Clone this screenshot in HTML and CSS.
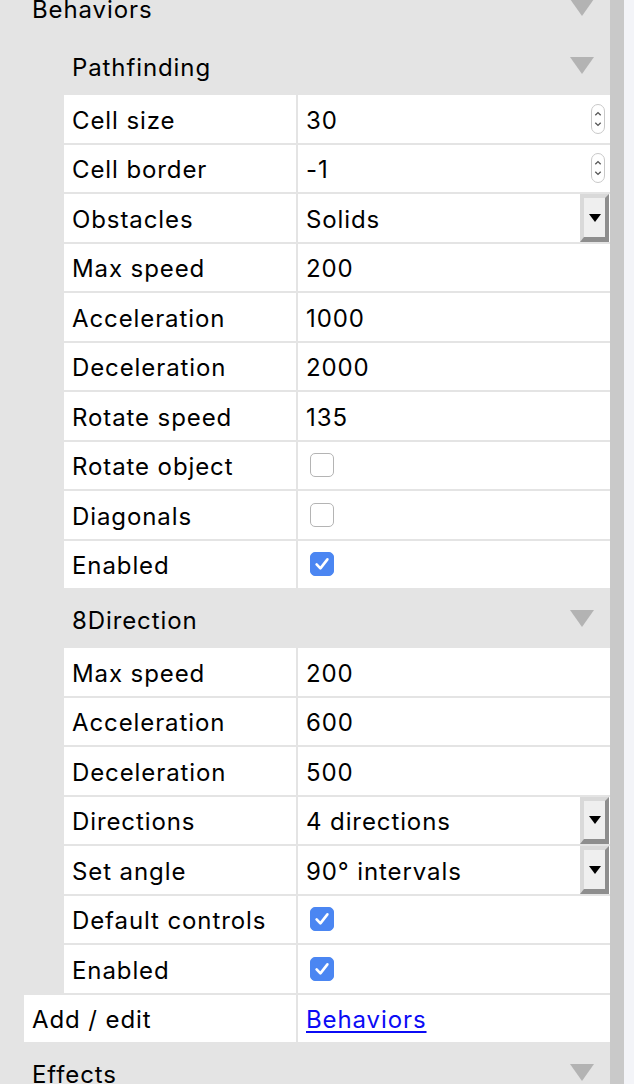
FILE: index.html
```html
<!DOCTYPE html>
<html>
<head>
<meta charset="utf-8">
<link rel="stylesheet" href="styles.css">
</head>
<body>
<div class="app">
  <main class="panel">
    <div class="hdr">Behaviors<span class="tri"></span></div>
    <div class="group">
      <div class="hdr">Pathfinding<span class="tri"></span></div>
      <div class="row"><div class="k">Cell size</div><div class="v">30<span class="spin"><svg viewBox="0 0 14 30" width="14" height="30"><rect x="0.5" y="0.5" width="13" height="29" rx="6.5" fill="#fff" stroke="#c8c8c8"/><path d="M4.3 11.3 L7 8.6 L9.7 11.3" fill="none" stroke="#555" stroke-width="1.3"/><path d="M4.3 18.7 L7 21.4 L9.7 18.7" fill="none" stroke="#555" stroke-width="1.3"/></svg></span></div></div>
      <div class="row"><div class="k">Cell border</div><div class="v">-1<span class="spin"><svg viewBox="0 0 14 30" width="14" height="30"><rect x="0.5" y="0.5" width="13" height="29" rx="6.5" fill="#fff" stroke="#c8c8c8"/><path d="M4.3 11.3 L7 8.6 L9.7 11.3" fill="none" stroke="#555" stroke-width="1.3"/><path d="M4.3 18.7 L7 21.4 L9.7 18.7" fill="none" stroke="#555" stroke-width="1.3"/></svg></span></div></div>
      <div class="row"><div class="k">Obstacles</div><div class="v">Solids<span class="drop"><span class="dtri"></span></span></div></div>
      <div class="row"><div class="k">Max speed</div><div class="v">200</div></div>
      <div class="row"><div class="k">Acceleration</div><div class="v">1000</div></div>
      <div class="row"><div class="k">Deceleration</div><div class="v">2000</div></div>
      <div class="row"><div class="k">Rotate speed</div><div class="v">135</div></div>
      <div class="row"><div class="k">Rotate object</div><div class="v"><span class="cb"></span></div></div>
      <div class="row"><div class="k">Diagonals</div><div class="v"><span class="cb"></span></div></div>
      <div class="row"><div class="k">Enabled</div><div class="v"><span class="cb on"><svg viewBox="0 0 24 24" width="24" height="24"><path d="M6.6 12.4 L10.4 16.4 L17.4 7.4" fill="none" stroke="#fff" stroke-width="2.6" stroke-linecap="round" stroke-linejoin="round"/></svg></span></div></div>

      <div class="hdr">8Direction<span class="tri"></span></div>
      <div class="row"><div class="k">Max speed</div><div class="v">200</div></div>
      <div class="row"><div class="k">Acceleration</div><div class="v">600</div></div>
      <div class="row"><div class="k">Deceleration</div><div class="v">500</div></div>
      <div class="row"><div class="k">Directions</div><div class="v">4 directions<span class="drop"><span class="dtri"></span></span></div></div>
      <div class="row"><div class="k">Set angle</div><div class="v">90° intervals<span class="drop"><span class="dtri"></span></span></div></div>
      <div class="row"><div class="k">Default controls</div><div class="v"><span class="cb on"><svg viewBox="0 0 24 24" width="24" height="24"><path d="M6.6 12.4 L10.4 16.4 L17.4 7.4" fill="none" stroke="#fff" stroke-width="2.6" stroke-linecap="round" stroke-linejoin="round"/></svg></span></div></div>
      <div class="row"><div class="k">Enabled</div><div class="v"><span class="cb on"><svg viewBox="0 0 24 24" width="24" height="24"><path d="M6.6 12.4 L10.4 16.4 L17.4 7.4" fill="none" stroke="#fff" stroke-width="2.6" stroke-linecap="round" stroke-linejoin="round"/></svg></span></div></div>
    </div>
    <div class="row"><div class="k">Add / edit</div><div class="v"><a href="#" class="link">Behaviors</a></div></div>
    <div class="hdr">Effects<span class="tri"></span></div>
  </main>
  <div class="scroll"></div>
  <div class="strip"></div>
</div>
</body>
</html>
```

FILE: styles.css
```css
html, body {
  margin: 0;
  padding: 0;
  height: 1084px;
  overflow: hidden;
}
body {
  font-family: "Inter", "Noto Sans", sans-serif;
  font-size: 24px;
  letter-spacing: 0.9px;
  color: #000;
  background: #e4e4e4;
}
.app {
  display: flex;
  height: 1084px;
}
.panel {
  width: 586px;
  padding-left: 24px;
  background: #e4e4e4;
  margin-top: -21px;
  flex: none;
}
.scroll {
  width: 14px;
  background: #c9c9c9;
  flex: none;
}
.strip {
  width: 10px;
  background: #f3f4f8;
  flex: none;
}
.group {
  padding-left: 40px;
}
.hdr {
  height: 58px;
  display: flex;
  align-items: center;
  justify-content: space-between;
  padding: 2px 16px 0 8px;
  box-sizing: border-box;
}
.tri {
  width: 0;
  height: 0;
  border-left: 12px solid transparent;
  border-right: 12px solid transparent;
  border-top: 17px solid #b3b3b3;
  margin-top: -4px;
}
.row {
  display: grid;
  grid-template-columns: 1fr 312px;
  column-gap: 2px;
  height: 47.5px;
  margin-bottom: 2px;
}
.k, .v {
  background: #fff;
  display: flex;
  align-items: center;
  position: relative;
  box-sizing: border-box;
  padding-top: 3px;
}
.k {
  padding-left: 8px;
}
.v {
  padding-left: 8px;
}
.spin {
  position: absolute;
  right: 5px;
  top: 50%;
  transform: translateY(-50%);
  height: 30px;
  display: block;
}
.spin svg {
  display: block;
}
.drop {
  position: absolute;
  right: 1px;
  top: 0;
  bottom: 0;
  width: 29px;
  box-sizing: border-box;
  background: #efefef;
  border-style: solid;
  border-width: 4px 4px 5px 4px;
  border-color: #d9d9d9 #8e8e8e #8e8e8e #d9d9d9;
  display: flex;
  align-items: center;
  justify-content: center;
}
.dtri {
  width: 0;
  height: 0;
  border-left: 6.5px solid transparent;
  border-right: 6.5px solid transparent;
  border-top: 8px solid #000;
  margin-top: 1px;
}
.cb {
  width: 24px;
  height: 24px;
  margin-left: 4px;
  margin-top: -3px;
  box-sizing: border-box;
  border: 1px solid #b4b4b4;
  border-radius: 5px;
  background: #fff;
  display: flex;
  align-items: center;
  justify-content: center;
}
.cb.on {
  background: #4b86f2;
  border-color: #4b86f2;
}
.cb svg {
  display: block;
  flex: none;
}
.link {
  color: #0b0bf5;
  text-decoration: underline;
  text-underline-offset: 3px;
  text-decoration-thickness: 2px;
}
```
